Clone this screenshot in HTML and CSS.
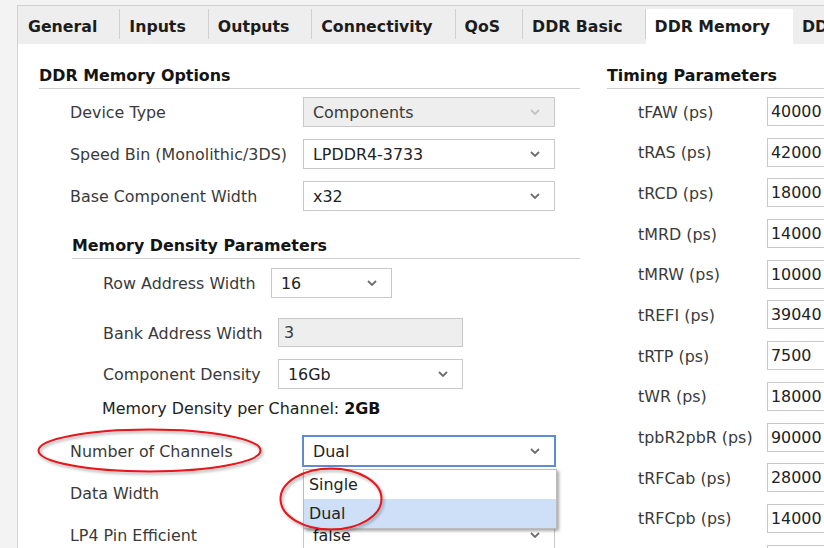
FILE: index.html
```html
<!DOCTYPE html>
<html>
<head>
<meta charset="utf-8">
<link rel="stylesheet" href="styles.css">
</head>
<body>
<div class="window">
  <div class="tabs">
    <div class="tab first">General</div>
    <div class="tab">Inputs</div>
    <div class="tab">Outputs</div>
    <div class="tab">Connectivity</div>
    <div class="tab">QoS</div>
    <div class="tab">DDR Basic</div>
    <div class="tab active">DDR Memory</div>
    <div class="tab">DDR Advanced</div>
  </div>
  <div class="content">
    <section class="col">
      <h2 class="sec">DDR Memory Options</h2>
      <div class="form">
        <div class="lbl">Device Type</div>
        <div class="combo disabled"><span>Components</span><svg class="chev" viewBox="0 0 10 6"><polyline points="1,1 5,5 9,1"/></svg></div>
        <div class="lbl">Speed Bin (Monolithic/3DS)</div>
        <div class="combo"><span>LPDDR4-3733</span><svg class="chev" viewBox="0 0 10 6"><polyline points="1,1 5,5 9,1"/></svg></div>
        <div class="lbl">Base Component Width</div>
        <div class="combo"><span>x32</span><svg class="chev" viewBox="0 0 10 6"><polyline points="1,1 5,5 9,1"/></svg></div>
      </div>
      <div class="sub">
        <h3 class="sec subsec">Memory Density Parameters</h3>
        <div class="rowaddr">
          <div class="lbl">Row Address Width</div>
          <div class="combo"><span>16</span><svg class="chev" viewBox="0 0 10 6"><polyline points="1,1 5,5 9,1"/></svg></div>
        </div>
        <div class="dens">
          <div class="lbl">Bank Address Width</div>
          <div class="field disabled short">3</div>
          <div class="lbl">Component Density</div>
          <div class="combo"><span>16Gb</span><svg class="chev" viewBox="0 0 10 6"><polyline points="1,1 5,5 9,1"/></svg></div>
        </div>
        <div class="per">Memory Density per Channel: <b>2GB</b></div>
      </div>
      <div class="form channels">
        <div class="lbl">Number of Channels</div>
        <div class="popwrap">
          <div class="combo focus"><span>Dual</span><svg class="chev" viewBox="0 0 10 6"><polyline points="1,1 5,5 9,1"/></svg></div>
          <div class="popup">
            <div class="item">Single</div>
            <div class="item sel">Dual</div>
          </div>
        </div>
        <div class="lbl">Data Width</div>
        <div class="combo"><span>64</span><svg class="chev" viewBox="0 0 10 6"><polyline points="1,1 5,5 9,1"/></svg></div>
        <div class="lbl">LP4 Pin Efficient</div>
        <div class="combo"><span>false</span><svg class="chev" viewBox="0 0 10 6"><polyline points="1,1 5,5 9,1"/></svg></div>
      </div>
    </section>
    <section class="col">
      <h2 class="sec">Timing Parameters</h2>
      <div class="tform">
        <div class="lbl">tFAW (ps)</div><div class="field">40000</div>
        <div class="lbl">tRAS (ps)</div><div class="field">42000</div>
        <div class="lbl">tRCD (ps)</div><div class="field">18000</div>
        <div class="lbl">tMRD (ps)</div><div class="field">14000</div>
        <div class="lbl">tMRW (ps)</div><div class="field">10000</div>
        <div class="lbl">tREFI (ps)</div><div class="field">39040</div>
        <div class="lbl">tRTP (ps)</div><div class="field">7500</div>
        <div class="lbl">tWR (ps)</div><div class="field">18000</div>
        <div class="lbl">tpbR2pbR (ps)</div><div class="field">90000</div>
        <div class="lbl">tRFCab (ps)</div><div class="field">28000</div>
        <div class="lbl">tRFCpb (ps)</div><div class="field">14000</div>
        <div class="lbl">tRPab (ps)</div><div class="field">21000</div>
      </div>
    </section>
  </div>
</div>
<svg class="annot" viewBox="0 0 824 548" width="824" height="548">
  <defs>
    <filter id="sh" x="-20%" y="-30%" width="140%" height="160%">
      <feDropShadow dx="1.5" dy="2" stdDeviation="1.5" flood-color="#000" flood-opacity="0.35"/>
    </filter>
  </defs>
  <ellipse cx="149.5" cy="450.5" rx="111" ry="21" filter="url(#sh)"/>
  <ellipse cx="331" cy="499" rx="50.5" ry="30.5" filter="url(#sh)"/>
</svg>
</body>
</html>
```
FILE: styles.css
```css
html, body {
  margin: 0;
  padding: 0;
}
body {
  background: #f3f3f3;
  font-family: "DejaVu Sans", "Noto Sans", sans-serif;
  font-size: 15.9px;
  color: #3a3a3a;
  height: 548px;
  overflow: hidden;
}
.window {
  margin: 5px 0 0 17px;
  border-left: 1px solid #d2d2d2;
  border-top: 1px solid #d2d2d2;
  background: #fff;
  height: 542px;
  overflow: hidden;
}
.tabs {
  display: flex;
  background: #eeeeee;
  height: 38px;
  padding-top: 3px;
  box-sizing: border-box;
  white-space: nowrap;
}
.tab {
  position: relative;
  flex: none;
  height: 35px;
  line-height: 35px;
  padding: 0 23px 0 9px;
  font-size: 15.75px;
  font-weight: bold;
  color: #1c1c1c;
}
.tab.first {
  padding-left: 10px;
}
.tab::after {
  content: "";
  position: absolute;
  right: 0;
  top: 0;
  width: 1px;
  height: 30px;
  background: #d0d0d0;
}
.tab.active {
  background: #fff;
}
.tab.active::after {
  display: none;
}
.content {
  display: grid;
  grid-template-columns: 541px 1fr;
  column-gap: 27px;
  padding-left: 21px;
}
.col {
  min-width: 0;
}
.sec {
  margin: 22px 0 0;
  font-size: inherit;
  font-weight: bold;
  line-height: 20px;
  padding-bottom: 2px;
  border-bottom: 1px solid #cfcfcf;
  color: #141414;
}
.subsec {
  margin-top: 25px;
}
.lbl {
  line-height: 20px;
  padding-top: 2px;
  white-space: nowrap;
}
.form {
  display: grid;
  grid-template-columns: 233px 252px;
  row-gap: 12px;
  padding-left: 31px;
  margin-top: 8px;
  align-items: center;
}
.combo, .field {
  height: 30px;
  box-sizing: border-box;
  border: 1px solid #c8c8c8;
  background: #fff;
  color: #222;
}
.combo {
  display: flex;
  align-items: center;
  justify-content: space-between;
  padding: 0 14px 0 9px;
}
.chev {
  width: 10px;
  height: 6px;
  fill: none;
  stroke: #6e6e6e;
  stroke-width: 1.8;
}
.disabled {
  background: #eeeeee;
  color: #3a3a3a;
}
.disabled .chev {
  stroke: #c2c2c2;
}
.sub {
  padding-left: 33px;
}
.rowaddr {
  display: grid;
  grid-template-columns: 168px 121px;
  padding-left: 31px;
  margin-top: 9px;
  align-items: center;
}
.dens {
  display: grid;
  grid-template-columns: 175px 185px;
  row-gap: 12px;
  padding-left: 31px;
  margin-top: 20px;
  align-items: center;
}
.field {
  line-height: 28px;
  padding-left: 3px;
  white-space: nowrap;
  overflow: hidden;
}
.field.short {
  height: 29px;
  line-height: 27px;
  padding-left: 5px;
}
.per {
  padding-left: 30px;
  margin-top: 10px;
  line-height: 20px;
  color: #222;
}
.per b {
  color: #111;
}
.channels {
  margin-top: 17px;
}
.popwrap {
  position: relative;
}
.combo.focus {
  border-color: #5e8bd4;
  box-shadow: 0 0 0 1px #5e8bd4;
}
.popup {
  position: absolute;
  left: 0;
  top: calc(100% + 3px);
  width: 254px;
  box-sizing: border-box;
  background: #fff;
  border: 1px solid #bcbcbc;
  box-shadow: 2px 2px 3px rgba(0, 0, 0, 0.35);
  z-index: 2;
}
.item {
  height: 29px;
  line-height: 29px;
  padding-left: 5px;
  color: #222;
}
.item.sel {
  background: #cde0f8;
}
.tform {
  display: grid;
  grid-template-columns: 129px 120px;
  row-gap: 11.7px;
  padding-left: 31px;
  margin-top: 8px;
  align-items: center;
}
.tform .field {
  height: 29px;
  line-height: 27px;
}
.annot {
  position: absolute;
  left: 0;
  top: 0;
  pointer-events: none;
  z-index: 5;
}
.annot ellipse {
  fill: none;
  stroke: #e5141a;
  stroke-width: 2;
}
```
